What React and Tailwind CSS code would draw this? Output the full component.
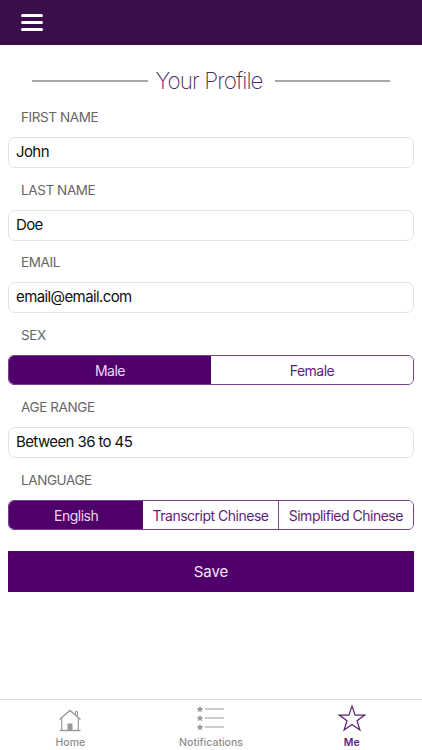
const font = { fontFamily: 'Inter, "Liberation Sans", sans-serif' }

function Label({ children, height = 'h-[42px]' }) {
  return (
    <div className={`flex items-end pb-[10px] pl-[21px] text-[13.5px] leading-[20px] tracking-[-0.4px] text-[#666666] ${height}`}>
      {children}
    </div>
  )
}

function TextField({ value }) {
  return (
    <div className="mx-2 h-[31px] rounded-[7px] border border-[#e3e3e3] bg-white pl-[7px] text-[15px] leading-[28px] tracking-[-0.6px] text-[#111111]">
      {value}
    </div>
  )
}

function Segments({ items }) {
  return (
    <div className="mx-2 flex h-[30px] overflow-hidden rounded-[6px] border border-[#74408a]">
      {items.map((item, i) => (
        <div
          key={item}
          className={`flex flex-1 items-center justify-center text-[14px] tracking-[-0.5px] ${
            i === 0 ? 'bg-[#50006b] text-[#ecd9f2]' : 'bg-white text-[#5e1e78]'
          } ${i > 1 ? 'border-l border-[#7f4a93]' : ''}`}
        >
          {item}
        </div>
      ))}
    </div>
  )
}

function HomeIcon() {
  return (
    <svg width="24" height="24" viewBox="0 0 24 24" fill="none" stroke="#9a9a9a">
      <path d="M1.5 11.5L12 2.5l10.5 9" strokeWidth="1.4" />
      <path d="M17.5 6.5V3.5h2v5" strokeWidth="1" />
      <path d="M3.7 10.5V22M20.3 10.5V22" strokeWidth="1.2" />
      <path d="M1.5 22.5h21" strokeWidth="1.4" />
      <rect x="9.5" y="15.5" width="5" height="7" fill="#9a9a9a" stroke="none" />
    </svg>
  )
}

function StarListIcon() {
  return (
    <svg width="30" height="26" viewBox="0 0 30 26" fill="none">
      {[3, 12, 21].map(y => (
        <g key={y}>
          <path
            d={`M4 ${y - 3.2}l1 2.2 2.4.3-1.8 1.6.5 2.4-2.1-1.2-2.1 1.2.5-2.4-1.8-1.6 2.4-.3z`}
            fill="#9a9a9a"
          />
          <path d={`M9 ${y}H28`} stroke="#9a9a9a" strokeWidth="1" />
        </g>
      ))}
    </svg>
  )
}

function Tab({ icon, label, active }) {
  return (
    <div className="flex flex-1 flex-col items-center">
      <div className="flex h-[32px] items-end justify-center">{icon}</div>
      <div className={`mt-[4px] text-[10.5px] leading-[13px] ${active ? 'font-semibold text-[#5e1e78]' : 'font-medium text-[#8e8e8e]'}`}>
        {label}
      </div>
    </div>
  )
}

export default function App() {
  return (
    <div style={font} className="flex h-[750px] w-[422px] flex-col bg-white">
      <div className="flex h-[45px] items-center bg-[#3a0d4c] pl-[21px]">
        <div className="flex w-[22px] flex-col gap-[4px]">
          <div className="h-[3px] rounded-full bg-white" />
          <div className="h-[3px] rounded-full bg-white" />
          <div className="h-[3px] rounded-full bg-white" />
        </div>
      </div>

      <div className="flex-1">
        <div className="flex h-[54px] items-end px-[32px]">
          <div className="flex h-[36px] w-full items-center justify-between">
            <div className="h-[2px] w-[116px] bg-[#a8a8a8]" />
            <div className="pr-[5px] text-[22.5px] font-extralight tracking-[-0.9px] text-[#4a2a60]">Your Profile</div>
            <div className="h-[2px] w-[115px] bg-[#a8a8a8]" />
          </div>
        </div>

        <Label height="h-[38px]">FIRST NAME</Label>
        <TextField value="John" />
        <Label>LAST NAME</Label>
        <TextField value="Doe" />
        <Label height="h-[41px]">EMAIL</Label>
        <TextField value="email@email.com" />
        <Label>SEX</Label>
        <Segments items={['Male', 'Female']} />
        <Label>AGE RANGE</Label>
        <TextField value="Between 36 to 45" />
        <Label>LANGUAGE</Label>
        <Segments items={['English', 'Transcript Chinese', 'Simplified Chinese']} />

        <div className="mx-2 mt-[21px] flex h-[41px] items-center justify-center bg-[#50006b] pt-[2px] text-[15px] text-[#f3e8f7]">
          Save
        </div>
      </div>

      <div className="flex h-[51px] border-t border-[#d9d9d9] bg-white">
        <Tab label="Home" icon={<HomeIcon />} />
        <Tab label="Notifications" icon={<StarListIcon />} />
        <Tab
          label="Me"
          active
          icon={
            <svg width="28" height="28" viewBox="0 0 28 28" fill="none">
              <path d="M14 2l3.1 9.1h9.6l-7.7 5.7 2.9 9.2-7.9-5.6-7.9 5.6 2.9-9.2-7.7-5.7h9.6z" stroke="#5e1e78" strokeWidth="1.2" />
            </svg>
          }
        />
      </div>
    </div>
  )
}
